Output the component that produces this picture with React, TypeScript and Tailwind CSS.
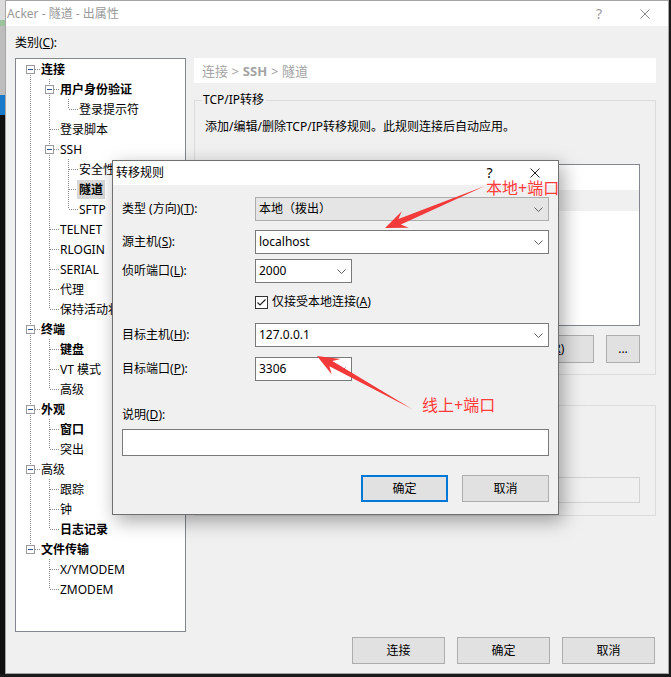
import React from 'react';

type Node = { t: string; l: number; b?: boolean; e?: boolean; s?: boolean };

const tree: Node[] = [
  { t: '连接', l: 0, b: true, e: true },
  { t: '用户身份验证', l: 1, b: true, e: true },
  { t: '登录提示符', l: 2 },
  { t: '登录脚本', l: 1 },
  { t: 'SSH', l: 1, e: true },
  { t: '安全性', l: 2 },
  { t: '隧道', l: 2, b: true, s: true },
  { t: 'SFTP', l: 2 },
  { t: 'TELNET', l: 1 },
  { t: 'RLOGIN', l: 1 },
  { t: 'SERIAL', l: 1 },
  { t: '代理', l: 1 },
  { t: '保持活动状态', l: 1 },
  { t: '终端', l: 0, b: true, e: true },
  { t: '键盘', l: 1, b: true },
  { t: 'VT 模式', l: 1 },
  { t: '高级', l: 1 },
  { t: '外观', l: 0, b: true, e: true },
  { t: '窗口', l: 1, b: true },
  { t: '突出', l: 1 },
  { t: '高级', l: 0, e: true },
  { t: '跟踪', l: 1 },
  { t: '钟', l: 1 },
  { t: '日志记录', l: 1, b: true },
  { t: '文件传输', l: 0, b: true, e: true },
  { t: 'X/YMODEM', l: 1 },
  { t: 'ZMODEM', l: 1 },
];

// does a sibling at this level follow row i?
const hasNext = (i: number, lvl: number) => {
  for (let j = i + 1; j < tree.length; j++) {
    if (tree[j].l < lvl) return false;
    if (tree[j].l === lvl) return true;
  }
  return false;
};

const dot = { stroke: '#8a8a8a', strokeWidth: 1, strokeDasharray: '1 1', shapeRendering: 'crispEdges' as const };

const TreeRow = ({ node, i }: { node: Node; i: number }) => {
  const cells = [];
  for (let k = 0; k < node.l; k++) {
    cells.push(
      <svg key={k} width="19" height="20" className="shrink-0">
        {hasNext(i, k) && <line x1="9.5" y1="0" x2="9.5" y2="20" {...dot} />}
      </svg>
    );
  }
  const below = hasNext(i, node.l);
  cells.push(
    <svg key="own" width="19" height="20" className="shrink-0">
      {i > 0 && <line x1="9.5" y1="0" x2="9.5" y2="10" {...dot} />}
      {below && <line x1="9.5" y1="10" x2="9.5" y2="20" {...dot} />}
      <line x1="10" y1="10.5" x2="19" y2="10.5" {...dot} />
      {node.e && (
        <g shapeRendering="crispEdges">
          <rect x="5.5" y="6.5" width="8" height="8" fill="#fff" stroke="#9a9a9a" />
          <line x1="7" y1="10.5" x2="12" y2="10.5" stroke="#2d4f93" />
        </g>
      )}
    </svg>
  );
  return (
    <div className="flex h-5 items-center whitespace-nowrap">
      <div className="w-[5px] shrink-0" />
      {cells}
      <span className={`ml-[-1px] px-[2px] leading-[19px] ${node.b ? 'font-bold' : ''} ${node.s ? 'bg-[#d9d9d9]' : ''}`}>
        {node.t}
      </span>
    </div>
  );
};

const Chevron = () => (
  <svg width="9" height="5" viewBox="0 0 9 5" className="shrink-0">
    <polyline points="0.5,0.5 4.5,4.5 8.5,0.5" fill="none" stroke="#606060" strokeWidth="1" />
  </svg>
);

const Close = ({ color }: { color: string }) => (
  <svg width="10" height="10" viewBox="0 0 10 10">
    <line x1="0.5" y1="0.5" x2="9.5" y2="9.5" stroke={color} strokeWidth="1" />
    <line x1="9.5" y1="0.5" x2="0.5" y2="9.5" stroke={color} strokeWidth="1" />
  </svg>
);

const Combo = ({ value, narrow, grey }: { value: string; narrow?: boolean; grey?: boolean }) => (
  <div
    className={`flex h-6 items-center justify-between pl-[3px] pr-[5px] border ${
      grey ? 'bg-[#e5e5e5] border-[#adadad]' : 'bg-white border-[#7a7a7a]'
    } ${narrow ? 'w-[97px]' : 'flex-1'}`}
  >
    <span>{value}</span>
    <Chevron />
  </div>
);

const Label = ({ text, k }: { text: string; k: string }) => (
  <span className="w-[133px] shrink-0">
    {text}(<u>{k}</u>):
  </span>
);

function arrow(x1: number, y1: number, x2: number, y2: number) {
  const len = Math.hypot(x2 - x1, y2 - y1);
  const ux = (x2 - x1) / len;
  const uy = (y2 - y1) / len;
  const px = -uy;
  const py = ux;
  const head = 22;
  const half = 9;
  const shaft = 3;
  const bx = x2 - ux * head;
  const by = y2 - uy * head;
  const jx = x2 - ux * head * 0.72;
  const jy = y2 - uy * head * 0.72;
  const pts = [
    [x1, y1],
    [jx + px * shaft, jy + py * shaft],
    [bx + px * half, by + py * half],
    [x2, y2],
    [bx - px * half, by - py * half],
    [jx - px * shaft, jy - py * shaft],
  ];
  return pts.map((p) => p.map((v) => v.toFixed(1)).join(',')).join(' ');
}

export default function App() {
  return (
    <div className="relative w-[671px] h-[677px] overflow-hidden bg-[#141414] text-[12px] leading-4 text-black font-['Noto_Sans','Noto_Sans_CJK_SC',sans-serif]">
      <div className="flex h-[674px]">
        {/* desktop behind */}
        <div className="flex w-[5px] flex-col">
          <div className="h-[20px] bg-[#dcdcdc]" />
          <div className="h-[6px] bg-[#9cc49c]" />
          <div className="h-[69px] bg-[#bdbdbd]" />
          <div className="h-[20px] bg-[#1979ca]" />
          <div className="flex-1 bg-[#101010]" />
        </div>

        {/* main window */}
        <div className="flex w-[664px] flex-col border border-[#a5a5a5] bg-[#f0f0f0]">
          <div className="flex h-[25px] items-center bg-white pl-[1px] text-[#999]">
            <span>Acker - 隧道 - 出属性</span>
            <div className="ml-auto flex h-full">
              <span className="flex w-[46px] items-center justify-center text-[14px]">?</span>
              <span className="flex w-[46px] items-center justify-center">
                <Close color="#8a8a8a" />
              </span>
            </div>
          </div>

          <div className="flex flex-1 flex-col pl-[9px] pr-[12px]">
            <div className="flex gap-[8px]">
              <div className="flex w-[171px] flex-col">
                <div className="mt-[9px] h-4">
                  类别(<u>C</u>):
                </div>
                <div className="mt-[7px] h-[574px] overflow-hidden border border-[#828790] bg-white">
                  {tree.map((n, i) => (
                    <TreeRow key={i} node={n} i={i} />
                  ))}
                </div>
              </div>

              <div className="flex flex-1 flex-col pt-[32px]">
                <div className="flex h-[25px] items-center bg-white pl-[8px] text-[13px] text-[#a3a3a3]">
                  连接 &gt; <span className="mx-[4px] font-bold">SSH</span> &gt; 隧道
                </div>

                <fieldset className="mt-[9px] border border-[#dcdcdc] pl-[10px] pr-[15px] pb-[11px]">
                  <legend className="ml-[-4px] px-[2px] leading-4">TCP/IP转移</legend>
                  <div className="mt-[11px]">添加/编辑/删除TCP/IP转移规则。此规则连接后自动应用。</div>
                  <div className="mt-[29px] h-[162px] border border-[#828790] bg-white pt-[25px] pl-[1px]">
                    <div className="h-[21px] bg-[#f0f0f0]" />
                  </div>
                  <div className="mt-[9px] flex h-[28px] justify-end gap-[12px]">
                    <button className="w-[98px] border border-[#adadad] bg-[#e1e1e1]">
                      添加(<u>A</u>)...
                    </button>
                    <button className="w-[98px] border border-[#adadad] bg-[#e1e1e1]">
                      编辑(<u>E</u>)...
                    </button>
                    <button className="w-[98px] border border-[#adadad] bg-[#e1e1e1]">
                      删除(<u>R</u>)
                    </button>
                    <button className="w-[34px] border border-[#adadad] bg-[#e1e1e1]">...</button>
                  </div>
                </fieldset>

                <fieldset className="mt-[22px] border border-[#dcdcdc] pl-[10px] pr-[15px] pb-[12px]">
                  <legend className="ml-[-4px] px-[2px] leading-4">X11转移</legend>
                  <div className="mt-[4px] flex h-5 items-center">转发X11连接到(X):</div>
                  <div className="mt-[4px] flex h-5 items-center pl-[18px]">Xmanager(M)</div>
                  <div className="mt-[16px] flex h-[26px] items-center">
                    <span className="w-[145px] pl-[18px]">X DISPLAY(D):</span>
                    <div className="h-full flex-1 border border-[#d2d2d2] bg-[#f0f0f0]" />
                  </div>
                </fieldset>
              </div>
            </div>

            <div className="mr-px mt-[5px] flex h-[27px] justify-end gap-[12px]">
              <button className="w-[93px] border border-[#adadad] bg-[#e1e1e1]">连接</button>
              <button className="w-[93px] border border-[#adadad] bg-[#e1e1e1]">确定</button>
              <button className="w-[93px] border border-[#adadad] bg-[#e1e1e1]">取消</button>
            </div>
          </div>
        </div>

        <div className="w-[2px] bg-[#1a1a1a]" />
      </div>
      <div className="h-[3px] bg-[#1a1a1a]" />

      {/* 转移规则 dialog */}
      <div className="absolute left-[112px] top-[160px] flex h-[355px] w-[447px] flex-col border border-[#707070] bg-[#f0f0f0] shadow-[4px_6px_18px_rgba(0,0,0,0.35)]">
        <div className="flex h-[24px] items-center bg-white pl-[3px]">
          <span>转移规则</span>
          <div className="ml-auto flex h-full">
            <span className="flex w-[45px] items-center justify-center text-[14px]">?</span>
            <span className="flex w-[46px] items-center justify-center">
              <Close color="#222" />
            </span>
          </div>
        </div>

        <div className="flex flex-col px-[9px]">
          <div className="mt-[12px] flex items-center">
            <span className="w-[133px] shrink-0">
              类型 (方向)(<u>T</u>):
            </span>
            <Combo value="本地（拨出）" grey />
          </div>
          <div className="mt-[9px] flex items-center">
            <Label text="源主机" k="S" />
            <Combo value="localhost" />
          </div>
          <div className="mt-[5px] flex items-center">
            <Label text="侦听端口" k="L" />
            <Combo value="2000" narrow />
          </div>
          <div className="mt-[7px] flex h-6 items-center pl-[133px]">
            <span className="flex h-[13px] w-[13px] items-center justify-center border border-[#333] bg-white">
              <svg width="11" height="11" viewBox="0 0 11 11">
                <polyline points="1.5,5.5 4,8 9.5,2.5" fill="none" stroke="#222" strokeWidth="1.2" />
              </svg>
            </span>
            <span className="ml-[4px]">
              仅接受本地连接(<u>A</u>)
            </span>
          </div>
          <div className="mt-[9px] flex items-center">
            <Label text="目标主机" k="H" />
            <Combo value="127.0.0.1" />
          </div>
          <div className="mt-[10px] flex items-center">
            <Label text="目标端口" k="P" />
            <Combo value="3306" narrow />
          </div>
          <div className="mt-[26px] h-4">
            说明(<u>D</u>):
          </div>
          <div className="mt-[6px] h-[27px] border border-[#7a7a7a] bg-white" />
          <div className="mt-[19px] flex h-[27px] justify-end gap-[14px]">
            <button className="w-[87px] border-2 border-[#0078d7] bg-[#e1e1e1]">确定</button>
            <button className="w-[87px] border border-[#adadad] bg-[#e1e1e1]">取消</button>
          </div>
        </div>
      </div>

      {/* red annotations */}
      <svg className="pointer-events-none absolute left-0 top-0" width="671" height="677">
        <polygon points={arrow(485, 186, 385, 228)} fill="#f23a3a" />
        <polygon points={arrow(412, 409, 317, 356)} fill="#f23a3a" />
      </svg>
      <span className="pointer-events-none absolute left-[486px] top-[178px] text-[16px] leading-5 text-[#ff3c3c]">本地+端口</span>
      <span className="pointer-events-none absolute left-[422px] top-[395px] text-[16px] leading-5 text-[#ff3c3c]">线上+端口</span>
    </div>
  );
}
